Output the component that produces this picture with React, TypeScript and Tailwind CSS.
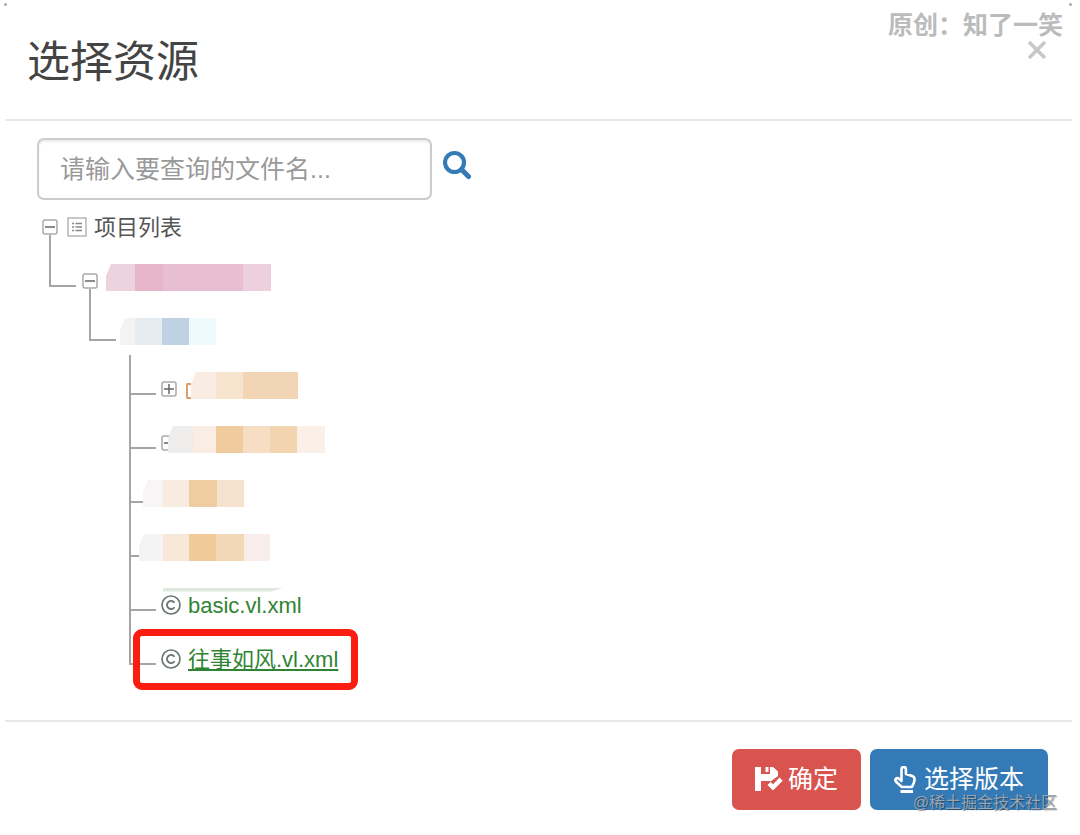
import type { ReactNode } from "react";
import clsx from "clsx";

function SearchIcon() {
  return (
    <svg className="size-[30px]" viewBox="0 0 30 30" fill="none" stroke="#337ab7" aria-hidden="true">
      <circle cx="11.500" cy="12.500" r="9.500" strokeWidth="4.200" />
      <path d="M18.500 19.500l7 7" strokeWidth="5" strokeLinecap="round" />
    </svg>
  );
}

function CloseIcon() {
  return (
    <svg className="size-[20px]" viewBox="0 0 20 20" stroke="#c8c8c8" strokeWidth="3.6" aria-hidden="true">
      <path d="M2 2l16 16M18 2L2 18" />
    </svg>
  );
}

function SavedIcon() {
  return (
    <svg className="h-[26px] w-[28px]" viewBox="0 0 28 26" fill="#fff" aria-hidden="true">
      <path d="M0 0h6v7.500h9V0h3l5 4.500V9l-7.500 5.500-2.500-1.500H6V24H0z" />
      <path d="M10.500 0h3v5h-3z" />
      <path d="M6 7h9v7H6z" />
      <path d="M24.500 10.500l3.200 3.200L18 23.500l-5.500-5.500 3-3 2.700 2.200z" />
    </svg>
  );
}

function HandUpIcon() {
  return (
    <svg className="h-[28px] w-[22px]" viewBox="0 0 22 28" fill="none" aria-hidden="true">
      <path
        d="M7.500 14V3.200a2.200 2.200 0 0 1 4.400 0V8l6.300 2c1.600.6 2.400 1.500 2.400 3.200 0 3-1.200 5-2.700 7.800H7.800L1.800 15.500c-1.300-1.800.3-3.900 2.400-3.300L7.500 15z"
        stroke="#fff"
        strokeWidth="2.600"
        strokeLinejoin="round"
      />
      <path d="M6.500 25.500h12.500" stroke="#fff" strokeWidth="3" />
    </svg>
  );
}

function ListIcon() {
  return (
    <svg className="size-[20px] shrink-0" viewBox="0 0 20 20" fill="none" aria-hidden="true">
      <rect x="1" y="1" width="18" height="18" stroke="#b5b5b5" strokeWidth="1.500" />
      <path d="M5 6.500h2M5 10h2M5 13.500h2M8.500 6.500H15M8.500 10H15M8.500 13.500H15" stroke="#888" strokeWidth="1.300" />
    </svg>
  );
}

function FileIcon() {
  return (
    <svg className="size-[20px] shrink-0" viewBox="0 0 20 20" fill="none" stroke="#6c786f" aria-hidden="true">
      <circle cx="10" cy="10" r="9" strokeWidth="1.700" />
      <path d="M13.500 7.700a4.100 4.100 0 1 0 0 4.600" strokeWidth="1.900" />
    </svg>
  );
}

function Toggle({ open = false, label }: { open?: boolean; label: string }) {
  return (
    <button type="button" aria-label={label} aria-expanded={open} className="block size-4 shrink-0">
      <svg className="size-4" viewBox="0 0 16 16" fill="none" aria-hidden="true">
        <rect x="1" y="1" width="14" height="14" rx="2" stroke="#aaa" strokeWidth="1.500" />
        <path d={open ? "M3 8h10" : "M3 8h10M8 3v10"} stroke="#666" strokeWidth="1.500" />
      </svg>
    </button>
  );
}

// Toggle with the line that runs down to its children
function OpenToggle({ label }: { label: string }) {
  return (
    <span className="flex h-full w-4 flex-col items-center">
      <span className="flex-1" />
      <Toggle open label={label} />
      <span className="w-[2px] flex-1 bg-[#a5a5a5]" />
    </span>
  );
}

type NodeProps = {
  last?: boolean;
  lineClass?: string;
  row: ReactNode;
  children?: ReactNode;
};

function Node({ last = false, lineClass = "w-[27px]", row, children }: NodeProps) {
  return (
    <li>
      <div className="flex h-[54px] items-center">
        <span className="flex h-full shrink-0 flex-col">
          <span className={clsx("h-[33px] border-b-2 border-l-2 border-[#a5a5a5]", lineClass)} />
          {!last && <span className="w-[2px] flex-1 bg-[#a5a5a5]" />}
        </span>
        {row}
      </div>
      {children}
    </li>
  );
}

function Mosaic({ className, cells }: { className?: string; cells: string[] }) {
  return (
    <span
      className={clsx(
        "relative mt-[10px] flex h-[27px] self-start [clip-path:polygon(5px_0,100%_0,100%_100%,0_100%,0_12px)]",
        className,
      )}
    >
      {cells.map((cell, i) => (
        <span key={i} className={cell} />
      ))}
    </span>
  );
}

export default function App() {
  return (
    <div className="relative min-h-screen bg-white pr-2 pl-[5px] font-['Liberation_Sans','Noto_Sans_CJK_SC',sans-serif] text-[22px] text-[#555]">
      <span className="absolute top-[3px] left-[4px] size-[3px] rounded-full bg-[#aaa]" />
      <span className="absolute top-[3px] right-[8px] size-[3px] rounded-full bg-[#aaa]" />
      <header className="flex h-[121px] items-start justify-between border-b-2 border-[#e8e8e8] pr-[25px] pl-[22px]">
        <h1 className="pt-[36px] text-[43px] leading-[52px] font-normal text-[#444]">选择资源</h1>
        <button type="button" aria-label="关闭" className="mt-[40px]">
          <CloseIcon />
        </button>
      </header>
      <p className="absolute top-[8px] right-[17px] text-[25px] leading-[34px] font-bold text-[#bbb]">原创：知了一笑</p>

      <main className="px-8 pt-[17px] pb-[34px]">
        <div className="flex">
          <input
            type="text"
            aria-label="文件名"
            placeholder="请输入要查询的文件名..."
            className="h-[62px] w-full max-w-[395px] rounded-[7px] border-2 border-[#ccc] px-[21px] text-[25px] shadow-[inset_0_2px_2px_rgba(0,0,0,0.08)] placeholder:text-[#999]"
          />
          <button type="button" aria-label="查询" className="mt-[12px] ml-[11px] self-start">
            <SearchIcon />
          </button>
        </div>

        <ul className="pl-[5px]">
          <li>
            <div className="flex h-[54px] items-center">
              <OpenToggle label="收起项目列表" />
              <span className="ml-[9px] flex items-center gap-[7px]">
                <ListIcon />
                <span>项目列表</span>
              </span>
            </div>
            <ul className="pl-[7px]">
              <Node
                last
                row={
                  <>
                    <span className="ml-[6px] h-full">
                      <OpenToggle label="收起" />
                    </span>
                    <Mosaic
                      className="ml-[8px]"
                      cells={["w-[29px] bg-[#edd3de]", "w-[28px] bg-[#e5b5ca]", "w-[80px] bg-[#e8bfd2]", "w-[28px] bg-[#ecd0de]"]}
                    />
                  </>
                }
              >
                <ul className="pl-[40px]">
                  <Node
                    last
                    row={
                      <Mosaic
                        className="ml-[4px]"
                        cells={["w-[15px] bg-[#f3f3f3]", "w-[27px] bg-[#e6edf2]", "w-[27px] bg-[#bfd1e3]", "w-[27px] bg-[#effafc]"]}
                      />
                    }
                  >
                    <ul className="-mt-[7px] pl-[40px]">
                      <li className="h-[7px]" aria-hidden="true">
                        <span className="block h-full w-[2px] bg-[#a5a5a5]" />
                      </li>
                      <Node
                        row={
                          <>
                            <span className="ml-[5px]">
                              <Toggle label="展开" />
                            </span>
                            <span className="mt-[4px] ml-[9px] h-[16px] w-[5px] rounded-l-[2px] border-2 border-r-0 border-[#dda06c]" />
                            <Mosaic cells={["w-[25px] bg-[#f9ede3]", "w-[27px] bg-[#f6e4ce]", "w-[55px] bg-[#f2d5b4]"]} />
                          </>
                        }
                      />
                      <Node
                        row={
                          <>
                            <span className="ml-[5px]">
                              <Toggle open label="收起" />
                            </span>
                            <Mosaic
                              className="-ml-[9px]"
                              cells={[
                                "w-[25px] bg-[#efedeb]",
                                "w-[23px] bg-[#faeee4]",
                                "w-[27px] bg-[#f0cb9e]",
                                "w-[27px] bg-[#f5dec3]",
                                "w-[27px] bg-[#f2d4b1]",
                                "w-[28px] bg-[#fbf0e7]",
                              ]}
                            />
                          </>
                        }
                      />
                      <Node
                        lineClass="w-[14px]"
                        row={<Mosaic cells={["w-[20px] bg-[#f7f5f5]", "w-[26px] bg-[#f8ece1]", "w-[28px] bg-[#efcca2]", "w-[27px] bg-[#f5e3cf]"]} />}
                      />
                      <Node
                        lineClass="w-[10px]"
                        row={
                          <Mosaic
                            cells={["w-[24px] bg-[#f5f4f4]", "w-[26px] bg-[#f8e8da]", "w-[27px] bg-[#f1ca99]", "w-[28px] bg-[#f3d8b7]", "w-[26px] bg-[#f8edeb]"]}
                          />
                        }
                      />
                      <Node
                        row={
                          <a href="#basic" className="relative ml-[5px] flex items-center gap-[7px] text-[#2f8434]">
                            <span className="absolute -top-[1px] left-[2px] h-[4px] w-[121px] bg-[#e0e8df] [clip-path:polygon(0_0,100%_0,90%_100%,0_100%)]" />
                            <FileIcon />
                            basic.vl.xml
                          </a>
                        }
                      />
                      <Node
                        last
                        row={
                          <a href="#wangshi" className="relative ml-[5px] flex items-center gap-[7px] text-[#2f8434]">
                            <FileIcon />
                            <span className="underline decoration-2 underline-offset-2">往事如风.vl.xml</span>
                            <span className="absolute -inset-y-[14px] -right-[20px] -left-[28px] rounded-[9px] border-[7px] border-[#fb1d10]" />
                          </a>
                        }
                      />
                    </ul>
                  </Node>
                </ul>
              </Node>
            </ul>
          </li>
        </ul>
      </main>

      <footer className="flex justify-end gap-[9px] border-t-2 border-[#e8e8e8] pt-[27px] pr-6 text-[25px] text-white">
        <button type="button" className="flex h-[61px] items-center gap-[5px] rounded-[7px] bg-[#d9534f] px-[23px]">
          <SavedIcon />
          确定
        </button>
        <button type="button" className="flex h-[61px] items-center gap-[8px] rounded-[7px] bg-[#337ab7] px-6">
          <HandUpIcon />
          选择版本
        </button>
      </footer>
      <p className="absolute top-[791px] right-[23px] text-[16px] leading-[24px] text-[#9aa5b0] [text-shadow:1px_1px_1px_rgba(0,0,0,0.4)]">
        @稀土掘金技术社区
      </p>
    </div>
  );
}
